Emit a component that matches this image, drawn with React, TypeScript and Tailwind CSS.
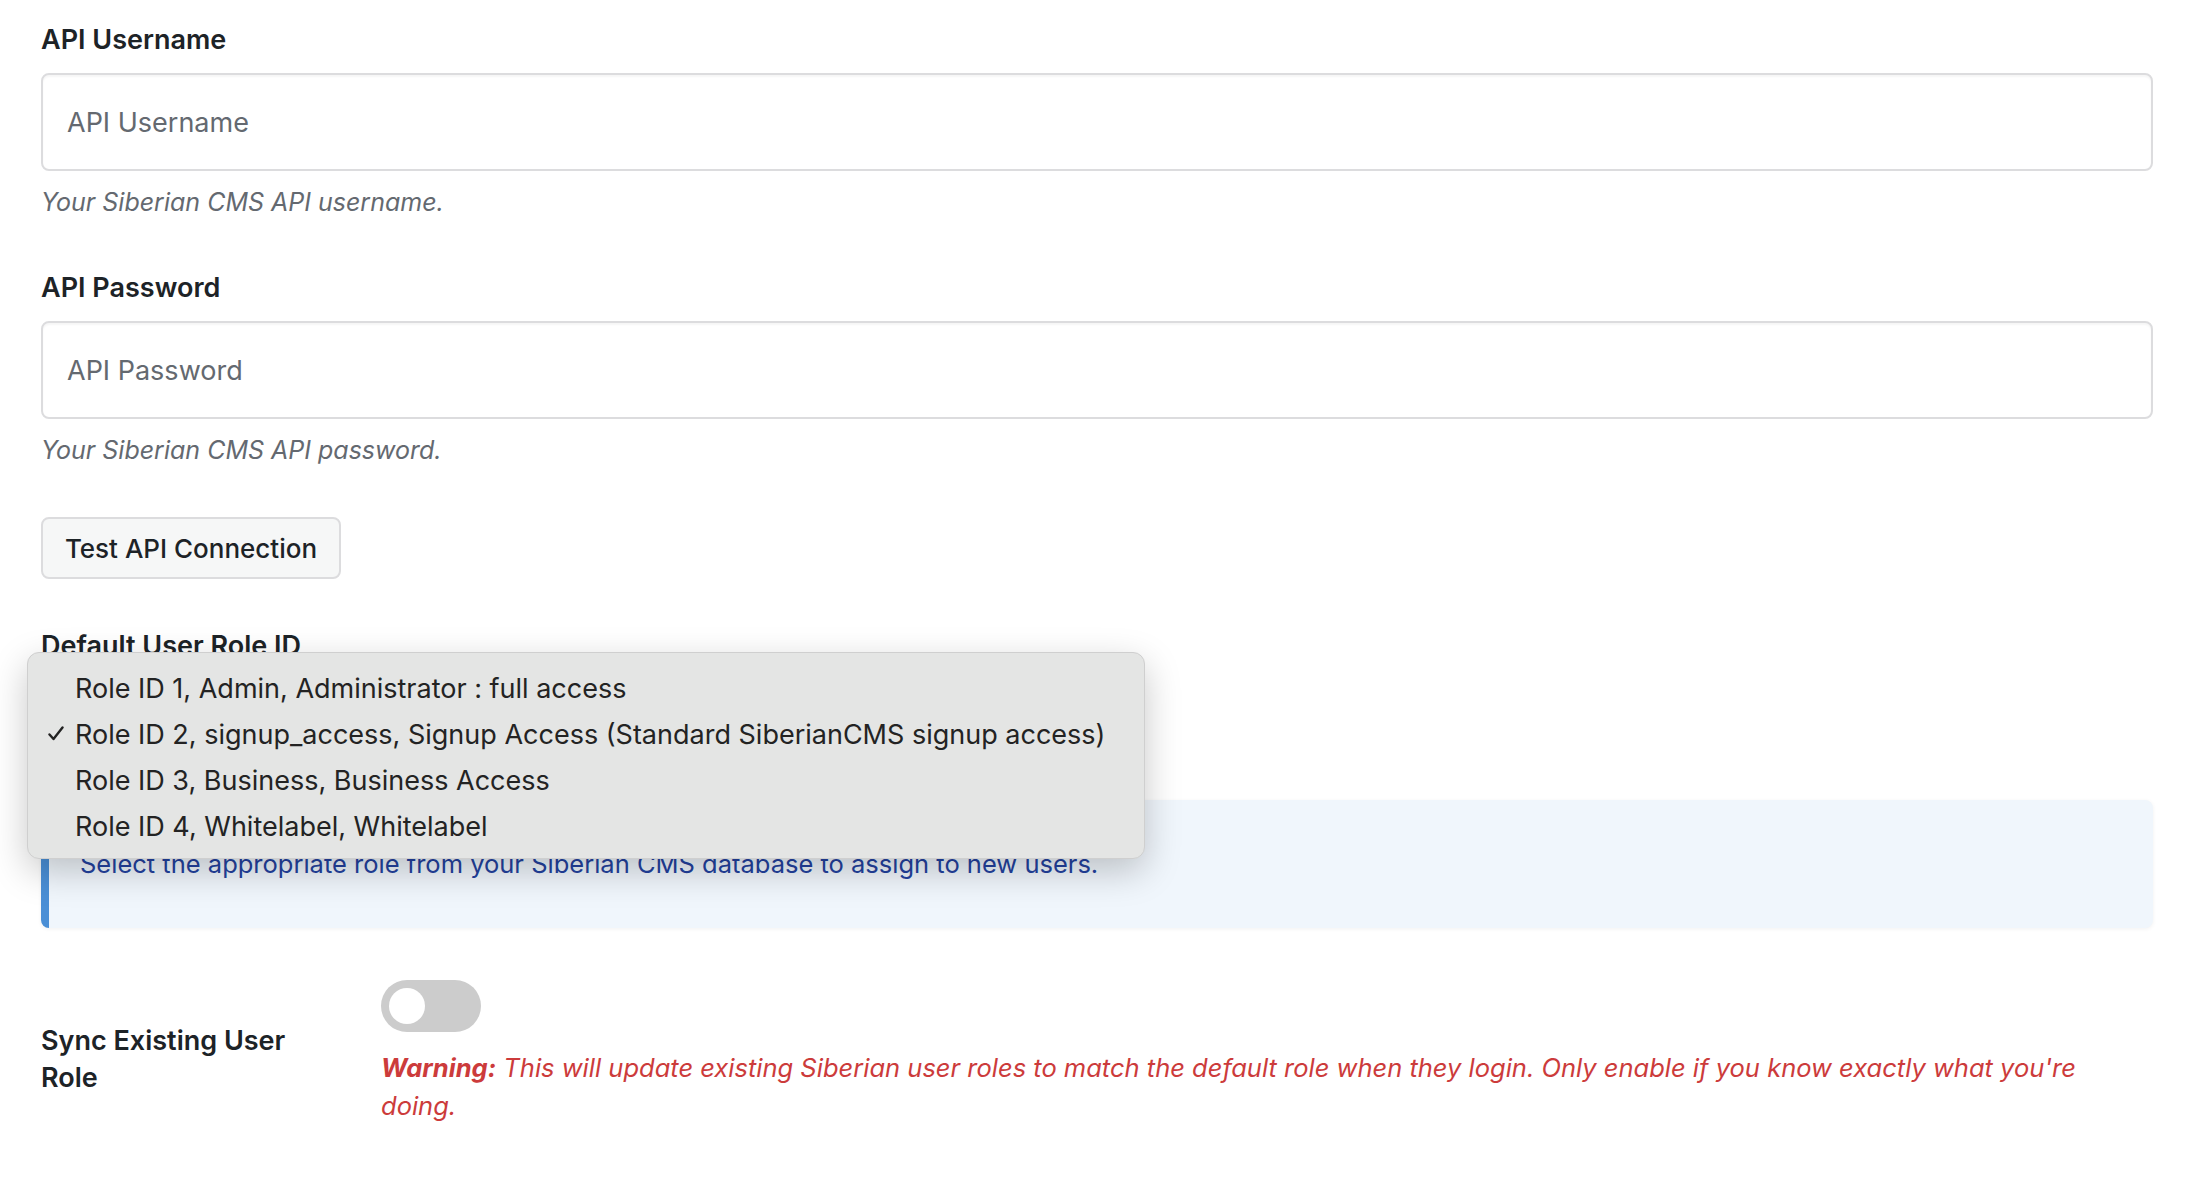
import React from "react";

const roles = [
  "Role ID 1, Admin, Administrator : full access",
  "Role ID 2, signup_access, Signup Access (Standard SiberianCMS signup access)",
  "Role ID 3, Business, Business Access",
  "Role ID 4, Whitelabel, Whitelabel",
];

function Field({ label, placeholder, hint }: { label: string; placeholder: string; hint: string }) {
  return (
    <div className="flex flex-col">
      <label className="text-[27px] leading-[36px] font-semibold text-[#1d2327]">{label}</label>
      <input
        placeholder={placeholder}
        className="mt-[15px] h-[98px] w-full rounded-[8px] border-2 border-[#dcdcde] bg-white px-[24px] text-[27px] text-[#1d2327] placeholder:text-[#646970] shadow-[inset_0_2px_2px_rgba(0,0,0,0.04)] outline-none"
      />
      <p className="mt-[13px] text-[25px] leading-[36px] italic text-[#646970]">{hint}</p>
    </div>
  );
}

export default function App() {
  const selected = 1;
  return (
    <div
      className="min-h-screen bg-white pl-[41px] pr-[39px] pt-[22px]"
      style={{ fontFamily: 'Inter, "Noto Sans", sans-serif' }}
    >
      <Field label="API Username" placeholder="API Username" hint="Your Siberian CMS API username." />
      <div className="mt-[50px]">
        <Field label="API Password" placeholder="API Password" hint="Your Siberian CMS API password." />
      </div>

      <button className="mt-[49px] h-[62px] w-[300px] rounded-[8px] border-2 border-[#dcdcde] bg-[#f6f7f7] text-[26px] font-medium text-[#1d2327]">
        Test API Connection
      </button>

      {/* Default role select with the native menu open */}
      <div className="relative mt-[49px]">
        <div className="text-[27px] leading-[36px] font-semibold text-[#1d2327]">Default User Role ID</div>
        <div className="mt-[10px] h-[70px] w-[1000px] rounded-[8px] border-2 border-[#dcdcde] bg-white" />

        <div className="mt-[56px] flex h-[128px] items-center rounded-[8px] border-l-[8px] border-[#4a8fd6] bg-[#f0f6fc] pl-[31px] shadow-[0_1px_4px_rgba(0,0,0,0.06)]">
          <p className="text-[25.5px] leading-[36px] text-[#2342a0]">
            Select the appropriate role from your Siberian CMS database to assign to new users.
          </p>
        </div>

        <div className="absolute left-[-14px] top-[24px] w-[1118px] rounded-[12px] border border-[#cfcfcf] bg-[#e4e5e4] pt-[13px] pb-[8px] shadow-[0_12px_36px_rgba(0,0,0,0.22)]">
          {roles.map((r, i) => (
            <div key={r} className="relative flex h-[46px] items-center pl-[47px] text-[27px] text-[#232323]">
              {i === selected && (
                <svg className="absolute left-[20px] top-[14px]" width="16" height="15" viewBox="0 0 16 15">
                  <path d="M1.5 8.5 L5.5 13 L14.5 1.5" fill="none" stroke="#232323" strokeWidth="2.4" strokeLinecap="round" strokeLinejoin="round" />
                </svg>
              )}
              {r}
            </div>
          ))}
        </div>
      </div>

      {/* Sync toggle row */}
      <div className="mt-[52px] flex items-center">
        <div className="w-[340px] shrink-0 pr-[60px] pt-[12px] text-[27px] leading-[37px] font-semibold text-[#1d2327]">
          Sync Existing User Role
        </div>
        <div className="flex flex-1 flex-col pr-[40px]">
          <div className="relative h-[52px] w-[100px] rounded-full bg-[#cccccc]">
            <span className="absolute left-[8px] top-[8px] h-[36px] w-[36px] rounded-full bg-white" />
          </div>
          <p className="mt-[17px] text-[25.5px] leading-[38px] italic text-[#cc3b3b]">
            <span className="font-bold">Warning:</span> This will update existing Siberian user roles to match the default role when they login. Only enable if you know exactly what you're doing.
          </p>
        </div>
      </div>
    </div>
  );
}
